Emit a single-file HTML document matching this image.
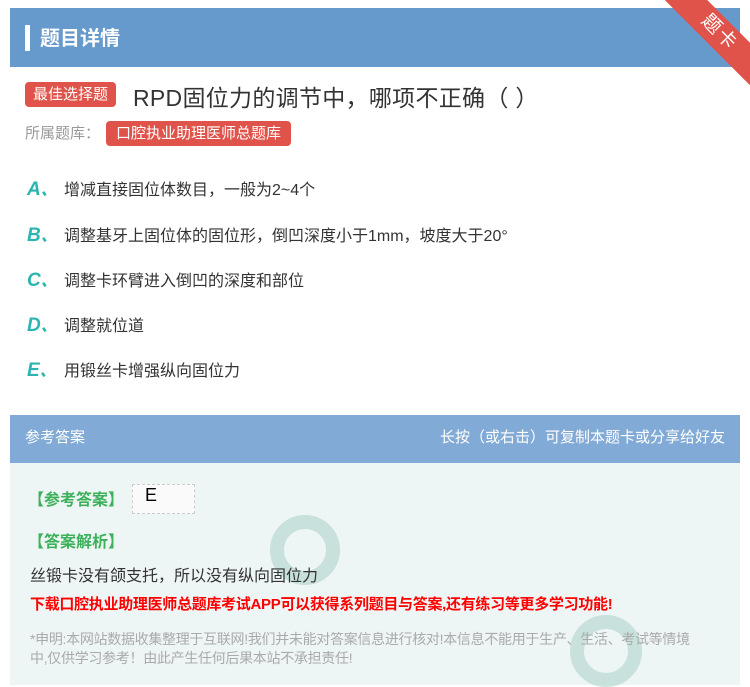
<!DOCTYPE html>
<html><head><meta charset="utf-8"><style>
*{margin:0;padding:0;box-sizing:border-box}
body{width:750px;height:685px;overflow:hidden;background:#fff;font-family:"Liberation Sans","Noto Sans CJK SC",sans-serif;position:relative}
.hd{position:absolute;left:10px;top:8px;width:730px;height:59px;background:#6699cc;}
.hd .bar{position:absolute;left:15px;top:17px;width:5px;height:26px;background:#fff}
.hd .t{position:absolute;left:30px;top:14px;color:#fff;font-size:20px;font-weight:bold}
.rib{position:absolute;right:-34px;top:18px;width:130px;height:30px;background:#e0534a;transform:rotate(45deg);color:#fff;font-size:19px;text-align:center;line-height:30px;letter-spacing:2px}
.tag{position:absolute;background:#e0534a;color:#fff;border-radius:4px;font-size:15px;padding:0 8px;height:25px;line-height:25px}
.q{position:absolute;left:133px;top:79px;font-size:23px;color:#333;letter-spacing:.3px}
.lib{position:absolute;left:25px;top:122px;font-size:15px;color:#999}
.opt{position:absolute;left:27px;font-size:16px;color:#333}
.opt b{color:#2bb5b0;font-style:italic;font-size:19px;font-weight:bold;display:inline-block;width:37px}
.opt b i{font-size:16px}
.ans{position:absolute;left:10px;top:415px;width:730px;height:270px;background:#eef6f5}
.ah{height:48px;background:#82aad6;color:#fff;font-size:15px;line-height:46px;padding:0 15px;display:flex;justify-content:space-between}
.g{position:absolute;color:#3cb05a;font-size:16px;font-weight:bold}
</style></head><body>
<div class="hd"><div class="bar"></div><div class="t">题目详情</div></div>
<div class="rib">题卡</div>
<div class="tag" style="left:25px;top:82px">最佳选择题</div>
<div class="q">RPD固位力的调节中，哪项不正确（ ）</div>
<div class="lib">所属题库：</div>
<div class="tag" style="left:106px;top:121px;padding:0 10px">口腔执业助理医师总题库</div>
<div class="opt" style="top:176px"><b>A<i>、</i></b>增减直接固位体数目，一般为2~4个</div>
<div class="opt" style="top:222px"><b>B<i>、</i></b>调整基牙上固位体的固位形，倒凹深度小于1mm，坡度大于20°</div>
<div class="opt" style="top:267px"><b>C<i>、</i></b>调整卡环臂进入倒凹的深度和部位</div>
<div class="opt" style="top:312px"><b>D<i>、</i></b>调整就位道</div>
<div class="opt" style="top:357px"><b>E<i>、</i></b>用锻丝卡增强纵向固位力</div>
<div class="ans"><div class="ah"><span>参考答案</span><span>长按（或右击）可复制本题卡或分享给好友</span></div>
<div style="position:absolute;left:260px;top:100px;width:70px;height:70px;border-radius:50%;border:14px solid #b8d8d2;opacity:.7"></div>
<div style="position:absolute;left:560px;top:200px;width:72px;height:72px;border-radius:50%;border:14px solid #b8d8d2;opacity:.7"></div>
</div>
<div class="g" style="left:28px;top:486px">【参考答案】</div>
<div style="position:absolute;left:132px;top:484px;width:63px;height:30px;background:#fafafa;border:1px dashed #ccc;font-size:18px;padding-left:12px">E</div>
<div class="g" style="left:28px;top:528px">【答案解析】</div>
<div style="position:absolute;left:30px;top:562px;font-size:16px;color:#333">丝锻卡没有颌支托，所以没有纵向固位力</div>
<div style="position:absolute;left:30px;top:593px;font-size:15px;color:#f00;font-weight:bold;letter-spacing:-0.3px">下载口腔执业助理医师总题库考试APP可以获得系列题目与答案,还有练习等更多学习功能!</div>
<div style="position:absolute;left:30px;top:630px;width:672px;font-size:14px;color:#aaa;line-height:19px;letter-spacing:-0.3px">*申明:本网站数据收集整理于互联网!我们并未能对答案信息进行核对!本信息不能用于生产、生活、考试等情境中,仅供学习参考！由此产生任何后果本站不承担责任!</div>
</body></html>
